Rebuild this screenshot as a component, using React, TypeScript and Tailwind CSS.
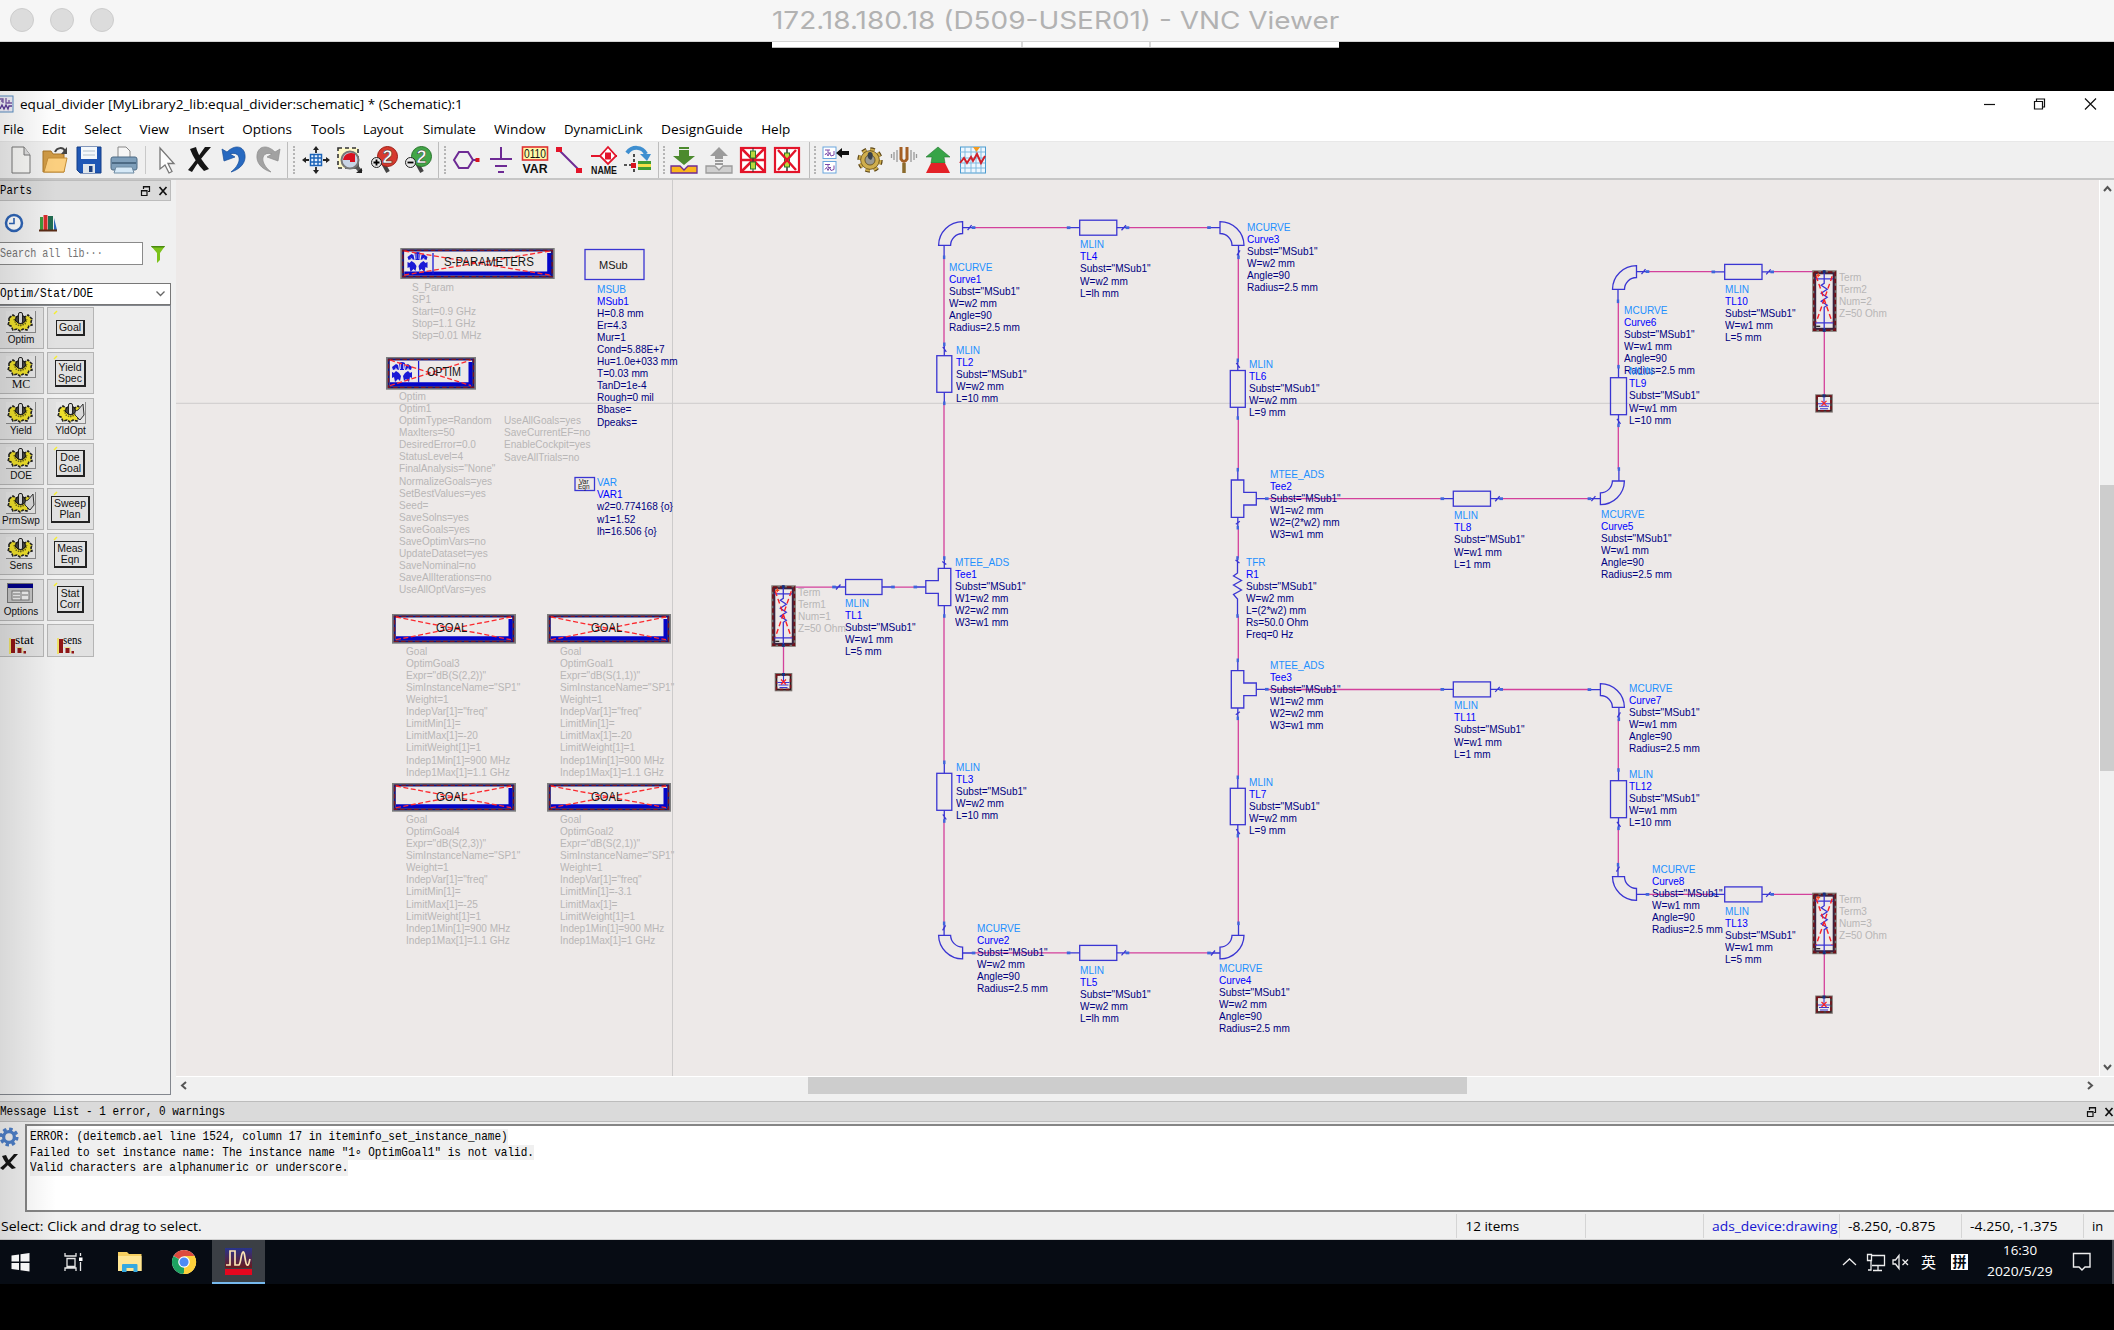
import React, { useLayoutEffect, useRef, useState } from "react";

/* Text condensed or widened to an exact width, measured at run time. */
function Fit({ w, className = "", children }: { w: number; className?: string; children: React.ReactNode }) {
  const ref = useRef<HTMLSpanElement>(null);
  const [scale, setScale] = useState(1);
  useLayoutEffect(() => {
    if (ref.current && ref.current.offsetWidth) setScale(w / ref.current.offsetWidth);
  }, [w]);
  return (
    <span className={`inline-block shrink-0 whitespace-nowrap ${className}`} style={{ width: w }}>
      <span ref={ref} className="inline-block origin-left" style={{ transform: `scaleX(${scale})` }}>
        {children}
      </span>
    </span>
  );
}

const UI = "font-['Open_Sans','Noto_Sans_CJK_SC',sans-serif]";
const MONO = "font-['Liberation_Mono',monospace]";

/* ---------- title and menu ---------- */

function VncBar() {
  return (
    <div className="relative flex h-[42px] shrink-0 items-center justify-center border-b border-[#d4d4d4] bg-[#f6f6f6] pr-[3px]">
      <div className="absolute left-[10px] top-2 flex gap-4">
        {[0, 1, 2].map((i) => (
          <div key={i} className="size-6 rounded-full border border-[#cdcdcd] bg-[#dcdcdc]" />
        ))}
      </div>
      <Fit w={567} className="font-['Inter',sans-serif] text-[24px] leading-[42px] text-[#b2b2b2]">
        172.18.180.18 (D509-USER01) - VNC Viewer
      </Fit>
    </div>
  );
}

function VncTab() {
  return (
    <div className="flex h-[49px] shrink-0 justify-center bg-black pr-[3px]">
      <div className="flex h-[6px] w-[567px] border-b border-[#bbb] bg-white">
        <div className="w-[251px] border-r-2 border-[#d8d8d8]" />
        <div className="w-[128px] border-r-2 border-[#d8d8d8]" />
      </div>
    </div>
  );
}

function WindowTitle() {
  return (
    <div className="flex h-[26px] shrink-0 items-center bg-white">
      <svg width="14" height="18" viewBox="0 0 14 18">
        <rect x="-4" y="1" width="17" height="16" fill="#f2f2fb" stroke="#5b8fc4" />
        <path d="M0 4h3v4M6 3v5h6M1 6h2M9 5v3" stroke="#7b5ba8" fill="none" strokeWidth="1.3" />
        <path d="M0 14l2-4 2 4 2-4 2 4 1-3h3" stroke="#5b3a98" fill="none" strokeWidth="1.3" />
      </svg>
      <Fit w={443} className={`ml-[6px] text-[13.5px] leading-[26px] text-black ${UI}`}>
        equal_divider [MyLibrary2_lib:equal_divider:schematic] * (Schematic):1
      </Fit>
      <div className="flex-1" />
      <svg width="130" height="20" viewBox="1984 92 130 20" fill="none" stroke="#111" strokeWidth="1.2">
        <path d="M1984 102.5h11" />
        <path d="M2034.500 99.500h8v7.500h-8zM2036.500 99.500v-2.500h8v8h-2" />
        <path d="M2085 96.500l11 11M2096 96.500l-11 11" />
      </svg>
    </div>
  );
}

const MENUS: [string, number][] = [
  ["File", 20.5], ["Edit", 24], ["Select", 37], ["View", 30], ["Insert", 36], ["Options", 50], ["Tools", 34.500],
  ["Layout", 41], ["Simulate", 53], ["Window", 51.500], ["DynamicLink", 79], ["DesignGuide", 81.500], ["Help", 29],
];

function MenuBar() {
  return (
    <div className={`flex h-[25px] shrink-0 items-center gap-[18.350px] border-b border-[#e8e8e8] bg-white pl-[3px] text-[13.5px] leading-[24px] text-black ${UI}`}>
      {MENUS.map(([t, w]) => (
        <Fit key={t} w={w}>{t}</Fit>
      ))}
    </div>
  );
}

/* ---------- toolbar ---------- */

function Cell({ children, w = 34.4 }: { children: React.ReactNode; w?: number }) {
  return (
    <div className="flex shrink-0 items-center justify-center" style={{ width: w }}>
      <svg className="overflow-visible" width="28" height="28" viewBox="0 0 28 28" fill="none">{children}</svg>
    </div>
  );
}

function Grip() {
  return <div className="h-7 w-0 border-l-2 border-dotted border-[#b5b5b5]" />;
}

function Sep({ tall = true }: { tall?: boolean }) {
  return <div className={tall ? "h-[36px] w-px bg-[#bdbdbd]" : "h-[28px] w-px bg-[#c9c9c9]"} />;
}

function ZoomTwo({ color, dark, minus }: { color: string; dark: string; minus?: boolean }) {
  return (
    <>
      <path d="M13 17l5 9" stroke="#444" strokeWidth="4" />
      <circle cx="17.500" cy="10.500" r="10" fill={color} stroke={dark} />
      <text x="17.500" y="16.500" textAnchor="middle" fontFamily="Liberation Sans" fontWeight="700" fontSize="18" fill="#fff" stroke="#333" strokeWidth=".5">2</text>
      <circle cx="6.500" cy="16.500" r="5" fill="#e8e8e8" stroke="#222" />
      <path d={minus ? "M3.500 16.500h6" : "M3.500 16.500h6M6.500 13.500v6"} stroke="#000" strokeWidth="1.800" />
    </>
  );
}

function MiniCircuit({ y }: { y: number }) {
  return (
    <g transform={`translate(2 ${y})`}>
      <rect width="13" height="11.500" fill="#fff" stroke="#6aa6dd" />
      <path d="M2 3h3v3h3M5 3h2M2 8l1.500-2 1.500 3 1.500-3 1.500 3 3-1V4" stroke="#7c4aa8" />
    </g>
  );
}

function Gear({ cx, cy, r, fill, hole, stroke }: { cx: number; cy: number; r: number; fill: string; hole: string; stroke?: string }) {
  return (
    <g fill="none">
      <circle cx={cx} cy={cy} r={r * 0.88} stroke={stroke ?? fill} strokeWidth={r * 0.36} strokeDasharray={`${r * 0.36} ${r * 0.331}`} />
      <circle cx={cx} cy={cy} r={r * 0.86} stroke={fill} strokeWidth={r * 0.2} strokeDasharray={`${r * 0.36} ${r * 0.315}`} />
      <circle cx={cx} cy={cy} r={r * 0.78} fill={fill} stroke={stroke} strokeWidth=".8" />
      <circle cx={cx} cy={cy} r={r * 0.42} fill={hole} stroke={stroke} strokeWidth=".8" />
    </g>
  );
}

function Toolbar() {
  return (
    <div className="flex h-[38px] shrink-0 items-center border-b-2 border-[#c6c6c6] bg-[#f0f0f0]">
      <div className="flex w-[145px] items-center pl-[3.500px]">
        <Cell>
          <path d="M5 1h12l6 8v18H5z" fill="#f7f7f5" stroke="#777" />
          <path d="M17 1v8h6" fill="#ddd" stroke="#777" />
        </Cell>
        <Cell>
          <path d="M2 26V5h8l2 3h11v18z" fill="#cf9a45" stroke="#a87527" />
          <path d="M3 26L7 12h19l-3 14z" fill="#fbcf7f" stroke="#c38d36" />
          <path d="M14 6c2-5 8-5 10-1" stroke="#444" strokeWidth="2" />
          <path d="M26 1v7h-6z" fill="#444" />
        </Cell>
        <Cell>
          <path d="M2 1h24v26H5l-3-3z" fill="#1f57b5" stroke="#153f87" />
          <rect x="6" y="1" width="16" height="12" fill="#f4f8fb" />
          <path d="M8 5h12M8 9h12" stroke="#c7d3dd" strokeWidth="1.500" />
          <path d="M8 27v-9h12v9z" fill="#dfe5ea" />
          <rect x="14" y="20" width="3.500" height="6" fill="#1c3f80" />
        </Cell>
        <Cell>
          <path d="M8 13V1h8l4 4v8z" fill="#f6f6f6" stroke="#888" />
          <rect x="1" y="11" width="26" height="13" rx="2" fill="#7f9fba" stroke="#4d6b85" />
          <path d="M2 17h24" stroke="#4d6b85" strokeWidth="2" />
          <path d="M6 21h16l2 6H4z" fill="#d6e9f7" stroke="#6f8ba2" />
        </Cell>
      </div>
      <Sep tall={false} />
      <div className="flex w-[141px] items-center pl-[2px]">
        <Cell>
          <path d="M9 2v21l5-4 4 8 3-1.500-4-8h6z" fill="#fdfdfd" stroke="#777" strokeWidth="1.300" />
        </Cell>
        <Cell>
          <path d="M2 24C8 17 14 8 19 1h6C18 9 11 17 6 26zM4 3l6-2c2 8 7 15 13 22l-5 2C12 19 7 11 4 3z" fill="#161616" />
        </Cell>
        <Cell>
          <path d="M2 3l2 12 11-4-5-3c6-2 10 1 9 7-1 4-4 8-8 11 10-3 15-10 14-17C24 0 15-2 7 6z" fill="#2769c0" stroke="#174e98" strokeWidth=".7" />
        </Cell>
        <Cell>
          <path d="M26 3l-2 12-11-4 5-3c-6-2-10 1-9 7 1 4 4 8 8 11C7 23 2 16 3 9 4 0 13-2 21 6z" fill="#a2a2a2" stroke="#8c8c8c" strokeWidth=".7" />
        </Cell>
      </div>
      <Sep />
      <div className="flex w-[150px] items-center pl-[5px]">
        <Grip />
        <div className="w-[3.500px]" />
        <Cell w={34}>
          <rect x="8.500" y="8.500" width="11" height="11" fill="#eaf4ff" stroke="#1b63b8" strokeWidth="1.500" />
          <path d="M12 8v12M16 8v12M8 12h12M8 16h12" stroke="#1b63b8" strokeWidth="1.400" />
          <path d="M14 0l3 4h-6zM14 28l3-4h-6zM0 14l4-3v6zM28 14l-4-3v6z" fill="#222" />
          <path d="M14 3v4M14 21v4M3 14h4M21 14h4" stroke="#222" strokeWidth="1.800" />
        </Cell>
        <Cell w={34}>
          <rect x="2" y="2" width="20" height="20" fill="#fdf9c8" stroke="#333" strokeWidth="1.600" strokeDasharray="4 3" />
          <path d="M20 20l5 6" stroke="#555" strokeWidth="4" />
          <circle cx="14" cy="14" r="8.500" fill="#c9d5e6" stroke="#777" strokeWidth="2" />
          <path d="M14 14H7a8 8 0 0 1 12-6v8h-5z" fill="#d8101e" />
          <path d="M26 22v5h-6z" fill="#222" />
        </Cell>
        <Cell w={34}><ZoomTwo color="#d63a2e" dark="#9c1e16" /></Cell>
        <Cell w={34}><ZoomTwo color="#43a648" dark="#28742b" minus /></Cell>
      </div>
      <Sep />
      <div className="flex w-[219px] items-center pl-[5px]">
        <Grip />
        <div className="w-[3px]" />
        <Cell w={34.400}>
          <path d="M7 6h9l5 8-5 8H7l-5-8z" stroke="#6d2a94" strokeWidth="2" />
          <path d="M21 14h4" stroke="#6d2a94" strokeWidth="2" />
          <rect x="23.500" y="12" width="4" height="4" fill="#d7151f" />
        </Cell>
        <Cell w={34.400}>
          <path d="M14 1v12M3 13h22M8 20h12M11 26h6" stroke="#6d2a94" strokeWidth="2" />
        </Cell>
        <Cell w={34.400}>
          <rect x="1.500" y="1" width="25" height="13" fill="#fff9a8" stroke="#e03030" strokeWidth="1.600" />
          <text x="14" y="12" textAnchor="middle" textLength="22" lengthAdjust="spacingAndGlyphs" fontFamily="Liberation Sans" fontSize="12" fill="#111">0110</text>
          <text x="14" y="27" textAnchor="middle" textLength="25" lengthAdjust="spacingAndGlyphs" fontFamily="Liberation Sans" fontWeight="700" fontSize="13" fill="#111">VAR</text>
        </Cell>
        <Cell w={34.400}>
          <path d="M4 4l20 20" stroke="#6d2a94" strokeWidth="2" />
          <rect x="1" y="1" width="6" height="5" fill="#e3142a" />
          <rect x="21" y="22" width="6" height="5" fill="#e3142a" />
        </Cell>
        <Cell w={34.400}>
          <path d="M1 10h5M22 10h5" stroke="#e3142a" strokeWidth="2" />
          <path d="M18 1l8 9-8 8-8-8z" fill="#fff" stroke="#e3142a" strokeWidth="1.800" />
          <path d="M3 10h7" stroke="#e3142a" strokeWidth="2" />
          <rect x="15" y="6.500" width="6" height="7" fill="#e3142a" />
          <text x="14" y="27.500" textAnchor="middle" textLength="26" lengthAdjust="spacingAndGlyphs" fontFamily="Liberation Sans" fontWeight="700" fontSize="10" fill="#111">NAME</text>
        </Cell>
        <Cell w={34.400}>
          <path d="M3 7C8 0 18 0 22 8" stroke="#3f8fd0" strokeWidth="4" />
          <path d="M16 8h11l-4 7z" fill="#3f8fd0" />
          <path d="M10 8v20M0 19h8" stroke="#222" strokeWidth="1.600" strokeDasharray="3 2" />
          <rect x="7" y="17" width="5" height="5" fill="#d7151f" />
          <rect x="14" y="15" width="13" height="9" fill="#3f9b34" />
          <rect x="14" y="18" width="13" height="3" fill="#f6e04a" />
        </Cell>
      </div>
      <Sep />
      <div className="flex w-[150px] items-center pl-[4px]">
        <Grip />
        <div className="w-[2px]" />
        <Cell w={34.400}>
          <path d="M9 1h10v2H9zM9 4h10v6h6l-11 9L3 10h6z" fill="#4c8a2e" />
          <path d="M1 20h9l4 4 4-4h9v7H1z" fill="#fbb51c" stroke="#6d2a94" strokeWidth="1.300" />
        </Cell>
        <Cell w={34.400}>
          <path d="M14 1l9 9h-5v3h-8v-3H5zM10 14h8v2h-8zM10 17h8v2h-8z" fill="#9b9b9b" />
          <path d="M1 20h9l4 4 4-4h9v7H1z" fill="#cfcfcf" stroke="#9b9b9b" strokeWidth="1.300" />
        </Cell>
        <Cell w={34.400}>
          <rect x="2" y="2" width="24" height="24" fill="#fff" stroke="#e3142a" strokeWidth="2.200" />
          <path d="M2 2l24 24M26 2L2 26M2 14h24" stroke="#e3142a" strokeWidth="2.600" />
          <path d="M14 2v24" stroke="#333" />
          <rect x="11.500" y="5" width="5" height="7" fill="#bcd83c" stroke="#2c7a2c" />
          <rect x="11.500" y="16" width="5" height="7" fill="#bcd83c" stroke="#2c7a2c" />
        </Cell>
        <Cell w={34.400}>
          <rect x="2" y="2" width="24" height="24" fill="#fff" stroke="#e3142a" strokeWidth="2.200" />
          <path d="M14 3v22" stroke="#333" strokeWidth="1.500" />
          <rect x="11.500" y="7" width="5" height="14" fill="#bcd83c" stroke="#2c7a2c" />
          <path d="M5 4l18 20M23 4L5 24" stroke="#e3142a" strokeWidth="2.400" />
        </Cell>
      </div>
      <Sep />
      <div className="flex items-center pl-[4px]">
        <Grip />
        <div className="w-[2px]" />
        <Cell>
          <MiniCircuit y={1} />
          <MiniCircuit y={15.500} />
          <path d="M15 7l6-5v3h7v4h-7v3z" fill="#111" />
        </Cell>
        <Cell>
          <Gear cx={14} cy={14} r={12} fill="#cfae4c" hole="#9a9a92" stroke="#5e481a" />
          <path d="M14 6c4 0 3 6 1 8l-2-1c-2-2-2-7 1-7z" fill="#39424a" />
        </Cell>
        <Cell>
          <path d="M11 1v12q3 5 6 0V1" stroke="#a45f24" strokeWidth="3" />
          <path d="M14 17v10" stroke="#8b6b2c" strokeWidth="3.500" />
          <path d="M7 4v12M21 4v12M4 6v8M24 6v8M1.500 8v4M26.500 8v4" stroke="#999" strokeWidth="1.300" />
        </Cell>
        <Cell>
          <path d="M14 1l12 10h-6l1 6H7l1-6H2z" fill="#37a447" stroke="#23772f" strokeWidth=".6" />
          <path d="M7 17h14l5 10H2z" fill="#e32228" />
        </Cell>
        <Cell>
          <rect x="1.500" y="1" width="25" height="26" fill="#eef7fe" stroke="#4b9bd0" />
          <path d="M6 1v26M12 1v26M17 1v26M22 1v26M1 6h25M1 12h25M1 17h25M1 22h25" stroke="#7fb9df" />
          <path d="M1 17l4-5 3 5 4-6 2 4 4-7 4 9 4-7" stroke="#d0212b" strokeWidth="2" />
          <path d="M14 1h7l-3.500 5z" fill="#f39a21" />
        </Cell>
      </div>
    </div>
  );
}

/* ---------- parts palette ---------- */

function FloatClose() {
  return (
    <svg width="30" height="12" viewBox="0 0 30 12" fill="none" stroke="#111" strokeWidth="1.200">
      <path d="M4.500 4V1.500h6v5H9M4 2h7" />
      <path d="M2.500 5.500h5.500v5H2.500zM2 6h6" />
      <path d="M20.500 2l7 8M27.500 2l-7 8" strokeWidth="1.700" />
    </svg>
  );
}

function YellowGear({ tool }: { tool?: boolean }) {
  return (
    <div className="mx-auto h-[22px] w-[30px] border-b border-r border-[#8a8a8a] bg-[#e6e6e6]">
      <svg width="29" height="21" viewBox="0 0 29 21" fill="none">
        <path d="M3 7l4-3 3 2 9-0 3-2 4 4-1 3 1 3-3 1-2 4-4-1-3 2-3-2-4 1-2-4-3-1 1-3z" fill="#efe02a" stroke="#222" strokeWidth="1.600" strokeDasharray="3 1" />
        <path d="M8 8l2 5 4 2 5-2 2-5" stroke="#6b6416" strokeWidth="1.400" strokeDasharray="1.500 1" />
        <path d="M9 9q6 8 11 0l-2-4h-7z" fill="#444" stroke="#111" />
        <rect x="12.500" y="1.500" width="4" height="11" rx="1.500" fill="#ddd" stroke="#222" />
        {tool && <path d="M27 2l-5 6q-4 1-3 5l5 5 4-5z" fill="#d9d9d9" stroke="#333" />}
      </svg>
    </div>
  );
}

function WindowGlyph() {
  return (
    <svg className="mx-auto" width="28" height="22" viewBox="0 0 28 22">
      <rect x=".5" y=".5" width="25" height="19" fill="#c4c4c4" stroke="#777" />
      <rect x="1" y="1" width="25" height="4" fill="#000087" />
      <rect x="5" y="8" width="17" height="9" fill="#eee" stroke="#777" />
      <path d="M6 11h7M6 14h7M14 8v9M15 12h6" stroke="#777" />
    </svg>
  );
}

function BarGlyph() {
  return (
    <svg className="shrink-0" width="18" height="18" viewBox="0 0 18 18">
      <path d="M1 1v16" stroke="#f0e040" strokeWidth="1.500" />
      <rect x="2" y="2" width="4" height="14" fill="#8f1616" />
      <rect x="8.500" y="11" width="4" height="5" fill="#8f1616" />
      <rect x="14.500" y="14" width="2.500" height="2.500" fill="#8f1616" />
      <path d="M7.500 10.500h6v5" stroke="#f0e040" strokeDasharray="1 1" fill="none" />
    </svg>
  );
}

type Part = { kind: "gear" | "tool" | "box" | "win" | "bar"; text: string[]; serif?: boolean };
const PARTS: Part[] = [
  { kind: "gear", text: ["Optim"] }, { kind: "box", text: ["Goal"] },
  { kind: "gear", text: ["MC"], serif: true }, { kind: "box", text: ["Yield", "Spec"] },
  { kind: "gear", text: ["Yield"] }, { kind: "tool", text: ["YldOpt"] },
  { kind: "gear", text: ["DOE"] }, { kind: "box", text: ["Doe", "Goal"] },
  { kind: "tool", text: ["PrmSwp"] }, { kind: "box", text: ["Sweep", "Plan"] },
  { kind: "gear", text: ["Sens"] }, { kind: "box", text: ["Meas", "Eqn"] },
  { kind: "win", text: ["Options"] }, { kind: "box", text: ["Stat", "Corr"] },
  { kind: "bar", text: ["stat"] }, { kind: "bar", text: ["sens"] },
];

function PartButton({ p, left }: { p: Part; left: boolean }) {
  const size = p.kind === "bar" ? "h-[33px]" : "h-[42px]";
  return (
    <div className={`${size} overflow-hidden border border-[#b5b5b5] bg-[#e1e1e1] ${left ? "border-l-0 pr-px" : ""}`}>
      {p.kind === "box" && (
        <div className="relative flex h-full items-center justify-center">
          <svg className="absolute left-[5px] top-[2px]" width="5" height="5"><path d="M1 4l3-3" stroke="#f5ee30" strokeWidth="1.500" /></svg>
          <div className="border border-b-2 border-r-2 border-[#222] px-[2px] py-px text-center font-['Liberation_Sans',sans-serif] text-[10.500px] leading-[11px] text-[#111]">
            {p.text.map((t) => <div key={t}>{t}</div>)}
          </div>
        </div>
      )}
      {p.kind === "bar" && (
        <div className="flex h-full items-end pb-px pl-[9px]">
          <BarGlyph />
          <Fit w={19} className="-ml-[12px] self-center font-['Liberation_Serif',serif] text-[12px] leading-[14px] text-black">{p.text[0]}</Fit>
        </div>
      )}
      {(p.kind === "gear" || p.kind === "tool" || p.kind === "win") && (
        <div className="pt-[3px] text-center">
          {p.kind === "win" ? <WindowGlyph /> : <YellowGear tool={p.kind === "tool"} />}
          <div className={p.serif ? "font-['Liberation_Serif',serif] text-[12px] leading-[12px] text-[#111]" : "font-['Liberation_Sans',sans-serif] text-[10px] leading-[13px] text-[#111]"}>
            {p.text[0]}
          </div>
        </div>
      )}
    </div>
  );
}

function PartsPanel() {
  return (
    <div className="flex w-[171px] shrink-0 flex-col">
      <div className={`flex h-[21px] items-center justify-between border border-l-0 border-[#bcbcbc] bg-[#dadada] pr-px pt-px text-[13px] leading-[20px] text-black ${MONO}`}>
        <Fit w={32}>Parts</Fit>
        <FloatClose />
      </div>
      <div className="flex h-[41px] items-center gap-[15px] pl-[4px] pt-[2px]">
        <svg width="20" height="20" viewBox="0 0 20 20" fill="none" stroke="#2e64b5">
          <circle cx="10" cy="10" r="8" fill="#fff" strokeWidth="2.500" />
          <path d="M10 5v5.500H5" strokeWidth="1.600" />
        </svg>
        <svg width="19" height="18" viewBox="0 0 19 18">
          <rect x="1" y="3" width="3" height="13" fill="#3d9a3d" />
          <rect x="4.500" y="1" width="4" height="15" fill="#d72d2d" />
          <rect x="9" y="2" width="5" height="14" fill="#206b50" />
          <path d="M15 4l3 12h-3z" fill="#2c66b8" />
          <path d="M0 16.500h18" stroke="#5a2c16" strokeWidth="2" />
        </svg>
      </div>
      <div className="flex h-[23px] items-center">
        <div className={`flex h-[23px] w-[143px] items-center border border-l-0 border-[#8a8a8a] bg-white text-[13px] leading-[20px] text-[#757575] ${MONO}`}>
          <Fit w={103}>Search all lib···</Fit>
        </div>
        <svg className="ml-[7px]" width="16" height="20" viewBox="0 0 16 20">
          <path d="M1 2h14L10 9v7l-3 3V9z" fill="#7cc21a" />
          <path d="M1 2h14l-1 1.500H2z" fill="#4a8a10" />
        </svg>
      </div>
      <div className={`mt-[18px] flex h-[22px] items-center justify-between border border-l-0 border-[#777] bg-white pr-[5px] text-[13px] leading-[20px] text-black ${MONO}`}>
        <Fit w={93}>Optim/Stat/DOE</Fit>
        <svg width="9" height="6" viewBox="0 0 9 6" fill="none" stroke="#666" strokeWidth="1.300"><path d="M.5 .5l4 4 4-4" /></svg>
      </div>
      <div className="flex-1 border-b border-r border-t border-[#83878e] pt-px">
        <div className="grid w-[94px] grid-cols-[44px_47px] gap-x-[3px] gap-y-[3.300px]">
          {PARTS.map((p, i) => <PartButton key={p.text.join("-")} p={p} left={i % 2 === 0} />)}
        </div>
      </div>
    </div>
  );
}

/* ---------- schematic ---------- */

const BLUE = "#3a35d2";
const WIRE = "#d3409b";
const OX = 176;
const OY = 181;

type Kind = "active" | "off";
type Label = { x: number; y: number; kind: Kind; lines: string[] };

const sub = 'Subst="MSub1"';
const mlin = (x: number, y: number, name: string, w: string, l: string): Label => ({
  x, y, kind: "active", lines: ["MLIN", name, sub, `W=${w} mm`, `L=${l} mm`],
});
const curve = (x: number, y: number, name: string, w: string): Label => ({
  x, y, kind: "active", lines: ["MCURVE", name, sub, `W=${w} mm`, "Angle=90", "Radius=2.5 mm"],
});
const tee = (x: number, y: number, name: string, w2: string): Label => ({
  x, y, kind: "active", lines: ["MTEE_ADS", name, sub, "W1=w2 mm", `W2=${w2} mm`, "W3=w1 mm"],
});
const term = (x: number, y: number, n: number): Label => ({
  x, y, kind: "off", lines: ["Term", `Term${n}`, `Num=${n}`, "Z=50 Ohm"],
});
const goal = (x: number, y: number, n: number, expr: string, min: string, max: string, hi: string): Label => ({
  x, y, kind: "off",
  lines: ["Goal", `OptimGoal${n}`, `Expr="dB(S(${expr}))"`, 'SimInstanceName="SP1"', "Weight=1", 'IndepVar[1]="freq"',
    `LimitMin[1]=${min}`, `LimitMax[1]=${max}`, "LimitWeight[1]=1", "Indep1Min[1]=900 MHz", `Indep1Max[1]=${hi} GHz`],
});

const LABELS: Label[] = [
  { x: 413, y: 287.7, kind: "off", lines: ["S_Param", "SP1", "Start=0.9 GHz", "Stop=1.1 GHz", "Step=0.01 MHz"] },
  { x: 399.300, y: 397, kind: "off", lines: ["Optim", "Optim1", "OptimType=Random", "MaxIters=50", "DesiredError=0.0", "StatusLevel=4", 'FinalAnalysis="None"', "NormalizeGoals=yes", "SetBestValues=yes", "Seed=", "SaveSolns=yes", "SaveGoals=yes", "SaveOptimVars=no", "UpdateDataset=yes", "SaveNominal=no", "SaveAllIterations=no", "UseAllOptVars=yes"] },
  { x: 505, y: 421.3, kind: "off", lines: ["UseAllGoals=yes", "SaveCurrentEF=no", "EnableCockpit=yes", "SaveAllTrials=no"] },
  { x: 597.3, y: 289.7, kind: "active", lines: ["MSUB", "MSub1", "H=0.8 mm", "Er=4.3", "Mur=1", "Cond=5.88E+7", "Hu=1.0e+033 mm", "T=0.03 mm", "TanD=1e-4", "Rough=0 mil", "Bbase=", "Dpeaks="] },
  { x: 598, y: 483.300, kind: "active", lines: ["VAR", "VAR1", "w2=0.774168 {o}", "w1=1.52", "lh=16.506 {o}"] },
  goal(407, 651.800, 3, "2,2", "", "-20", "1.1"),
  goal(560.700, 651.800, 1, "1,1", "", "-20", "1.1"),
  goal(407, 820, 4, "2,3", "", "-25", "1.1"),
  goal(560.700, 820, 2, "2,1", "-3.1", "", "1"),
  curve(950, 267.700, "Curve1", "w2"), curve(1247.500, 227.700, "Curve3", "w2"),
  curve(977.500, 928.700, "Curve2", "w2"), curve(1220, 968.700, "Curve4", "w2"),
  curve(1625, 310.700, "Curve6", "w1"), curve(1601.500, 515, "Curve5", "w1"),
  curve(1629.300, 688.700, "Curve7", "w1"), curve(1652.500, 870, "Curve8", "w1"),
  mlin(1080.500, 245.300, "TL4", "w2", "lh"), mlin(1080.500, 970.700, "TL5", "w2", "lh"),
  mlin(956.700, 350.700, "TL2", "w2", "10"), mlin(1250, 365, "TL6", "w2", "9"),
  mlin(956.700, 768, "TL3", "w2", "10"), mlin(1250, 782.700, "TL7", "w2", "9"),
  mlin(846, 603.700, "TL1", "w1", "5"), mlin(1725.500, 289.700, "TL10", "w1", "5"),
  mlin(1630, 372.300, "TL9", "w1", "10"), mlin(1454.500, 516.300, "TL8", "w1", "1"),
  mlin(1454.500, 706.300, "TL11", "w1", "1"), mlin(1630, 775, "TL12", "w1", "10"),
  mlin(1725.500, 912, "TL13", "w1", "5"),
  tee(1271, 475, "Tee2", "(2*w2)"), tee(1271, 665.500, "Tee3", "w2"), tee(955.500, 562.700, "Tee1", "w2"),
  { x: 1246.500, y: 562.700, kind: "active", lines: ["TFR", "R1", sub, "W=w2 mm", "L=(2*w2) mm", "Rs=50.0 Ohm", "Freq=0 Hz"] },
  term(798.500, 592.500, 1), term(1839.500, 277.500, 2), term(1839.500, 900, 3),
];

function LabelBlock({ l }: { l: Label }) {
  return (
    <div
      className="absolute origin-left scale-x-[0.915] whitespace-pre font-['Liberation_Sans',sans-serif] text-[11px] leading-[12.080px]"
      style={{ left: l.x - 0.7 - OX, top: l.y - 6 - OY }}
    >
      {l.lines.map((t, i) => (
        <div key={i} className={l.kind === "off" ? "text-[#b8b6b6]" : i === 0 ? "text-[#1e90ff]" : i === 1 ? "text-[#0000ff]" : "text-[#000080]"}>{t}</div>
      ))}
    </div>
  );
}

function Dot({ x, y, v }: { x: number; y: number; v?: boolean }) {
  return <rect x={x - (v ? 1.2 : 1.8)} y={y - (v ? 1.8 : 1.4)} width={v ? 2.4 : 3.6} height={v ? 3.6 : 2.8} fill="#3f66dc" />;
}

/* Horizontal line section with pins left and right of its body. */
function HLine({ x0, x1, y, a, b, mark = "r" }: { x0: number; x1: number; y: number; a: number; b: number; mark?: "l" | "r" }) {
  const m = mark === "r" ? b - 4 : a + 4;
  return (
    <g stroke={BLUE}>
      <rect x={x0} y={y - 7.5} width={x1 - x0} height="15" />
      <path d={`M${a} ${y}H${x0}M${x1} ${y}H${b}M${m - 2} ${y + 2.500}l4.500-5`} />
      <g stroke="none"><Dot x={a} y={y} /><Dot x={b} y={y} /></g>
    </g>
  );
}

/* Vertical line section with pins above and below its body. */
function VLine({ x, w, y0, y1, a, b, mark = "b" }: { x: number; w: number; y0: number; y1: number; a: number; b: number; mark?: "t" | "b" }) {
  const m = mark === "b" ? b - 4 : a + 5;
  return (
    <g stroke={BLUE}>
      <rect x={x - w / 2} y={y0} width={w} height={y1 - y0} />
      <path d={`M${x} ${a}V${y0}M${x} ${y1}V${b}M${x - 1.500} ${m - 2.500}l3.500 5`} />
      <g stroke="none"><Dot x={x} y={a} v /><Dot x={x} y={b} v /></g>
    </g>
  );
}

function Bend({ x, y, sx, sy, mark }: { x: number; y: number; sx: number; sy: number; mark: "h" | "v" | "" }) {
  return (
    <g transform={`translate(${x} ${y}) scale(${sx} ${sy})`} stroke={BLUE}>
      <path d="M0 -23.600A24 24 0 0 0 -24 0H-12A12 12 0 0 1 0 -11.800Z" />
      <path d="M0 -17.700H11M-18.500 0V12" />
      {mark === "h" && <path d="M5 -15.200l4-5" />}
      {mark === "v" && <path d="M-20 5l3 5" />}
      <g stroke="none"><Dot x={11} y={-17.7} /><Dot x={-18.5} y={12} v /></g>
    </g>
  );
}

function TeeShape({ x, y, dir, mark }: { x: number; y: number; dir: 1 | -1; mark: 1 | -1 }) {
  return (
    <g transform={`translate(${x} ${y}) scale(${dir} 1)`} stroke={BLUE}>
      <path d="M-6.500 -18.700H6V-6.300H18.500V6.300H6V18.700H-6.500Z" />
      <path d="M0 -29V-18.700M0 18.700V29M18.500 0H29.500" />
      <path d={`M-2 ${mark * 24 + 1.5}l4-3`} />
      <g stroke="none"><Dot x={0} y={-29} v /><Dot x={0} y={29} v /><Dot x={29} y={0} /></g>
    </g>
  );
}

/* Deactivated simulation block: framed box crossed out in red. */
function Block({ x, y, w, h, children }: { x: number; y: number; w: number; h: number; children?: React.ReactNode }) {
  return (
    <g>
      <rect x={x + 1} y={y + 1} width={w - 2} height={h - 2} stroke="#7d7d7d" strokeWidth="2" fill="#ede9e8" />
      <path d={`M${x + 4} ${y + h - 5.500}H${x + w - 5.500}V${y + 5}`} stroke="#0505c8" strokeWidth="4" />
      <rect x={x + 2.800} y={y + 2.500} width={w - 5.600} height={h - 5} stroke="#14147a" strokeWidth="2" />
      <rect x={x + 2.500} y={y + 2.300} width={w - 5} height={h - 4.600} stroke="#7a1420" strokeWidth="1.300" strokeDasharray="4.500 2.500" />
      {children}
      <path d={`M${x + 4} ${y + 3}L${x + w - 5} ${y + h - 4}M${x + 4} ${y + h - 4}L${x + w - 5} ${y + 3}`} stroke="#fb2a2f" strokeWidth="1.300" strokeDasharray="5 2.500" />
    </g>
  );
}

function GearLogo({ x, y }: { x: number; y: number }) {
  return (
    <g transform={`translate(${x} ${y})`} fill="#1a1ad6">
      <path d="M-3-9q3-2 6 0l-1 7h-4zM-6-8l2 1 1 5-3-1-3 1-1-3zM6-8l-2 1-1 5 3-1 3 1 1-3z" />
      <path d="M-10 0l2 1 2-2 3 2 2 3-1 5-2-2-3 3-1-5-2 1zM10 0l-2 1-2-2-3 2-2 3 1 5 2-2 3 3 1-5 2 1z" />
      <path d="M-1.500-8v5M1.500-8v5M-7-4l2 1M7-4l-2 1" stroke="#cfcdf0" strokeWidth=".8" />
    </g>
  );
}

function TermShape({ x, y }: { x: number; y: number }) {
  return (
    <g transform={`translate(${x} ${y})`}>
      <rect x="-12" y="0" width="24.500" height="61.500" fill="#7b736f" />
      <rect x="-9" y="3" width="18.500" height="55.500" fill="#ede9e8" stroke="#3a2440" strokeWidth="2" />
      <rect x="-10.300" y="1.800" width="21.300" height="58" stroke="#701018" strokeWidth="1.700" strokeDasharray="4.500 2.500" />
      <path d="M0 0V13l-3 2 6 4-6 4 6 4-6 4 6 4-3 2V61M-9 8.500H9M-9 52.500H9" stroke={BLUE} strokeWidth="1.300" />
      <path d="M-8 6L8 52M8 6L-8 52" stroke="#f82027" strokeWidth="1.400" strokeDasharray="5 3" />
      <path d="M-8 5h4M-6 3v4" stroke="#f24a20" strokeWidth="1.300" />
      <path d="M-8 56h4" stroke="#222" />
      <rect x="-1.500" y="0" width="3" height="3" fill="#14307c" />
      <rect x="-1.500" y="58.500" width="3" height="3" fill="#14307c" />
    </g>
  );
}

function GroundShape({ x, y }: { x: number; y: number }) {
  return (
    <g transform={`translate(${x} ${y})`}>
      <rect x="-8.800" y="0" width="17.600" height="18.300" fill="#7b736f" />
      <rect x="-6.200" y="2.700" width="12.400" height="12.900" fill="#ede9e8" />
      <rect x="-7" y="1.800" width="14" height="14.700" stroke="#2c1c20" strokeWidth="1.300" />
      <rect x="-7" y="1.800" width="14" height="14.700" stroke="#7d1018" strokeWidth="1.500" strokeDasharray="3.500 2.500" />
      <path d="M0 1V9M-6 9.500H6M-5 12H5M-4 14.500H4" stroke={BLUE} strokeWidth="1.100" />
      <path d="M-2.500 6.500l5 5M2.500 6.500l-5 5" stroke="#f82027" strokeWidth="1.200" />
      <rect x="-1.500" y="0" width="3" height="3" fill="#14307c" />
    </g>
  );
}

const WIRES = [
  "M944 258V345M944 404V559M944 617V763M944 822V925",
  "M1238.300 258V361M1238.300 419V470M1238.300 529V559M1238.300 617V661M1238.300 719V778M1238.300 837V925",
  "M973 228.600H1068M1127 228.600H1208M973 953.900H1068M1127 953.900H1208",
  "M783 588.200H834M893 588.200H915",
  "M1268 499.700H1442M1501 499.700H1589M1268 690.500H1442M1501 690.500H1589",
  "M1618.300 302V368M1618.300 426V470M1618.300 720V771M1618.300 829V867",
  "M1647 272.700H1713M1772 272.700H1824M1647 895.400H1713M1772 895.400H1824",
  "M1824.300 332V395M1824.300 955V997M783.500 647V674",
].join("");

function Drawing() {
  return (
    <svg className="absolute inset-0" width="1923" height="896" viewBox={`${OX} ${OY} 1923 896`} fill="none" strokeWidth="1.300">
      <path d="M672.500 181V1077M176 404.300H2099" stroke="#cdcbcb" strokeWidth="1" />
      <path d={WIRES} stroke={WIRE} strokeWidth="1.300" />

      <Block x={400.3} y={249} w={154.400} h={31}><path d="M433 254V275" stroke="#1a1ad6" /><GearLogo x={417.5} y={263} /></Block>
      <Block x={386} y={358} w={90} h={32.700}><path d="M418.600 362V384" stroke="#1a1ad6" /><GearLogo x={402} y={373} /></Block>
      <Block x={392} y={615} w={124} h={29.700} />
      <Block x={547} y={615} w={124} h={29.700} />
      <Block x={392} y={784} w={124} h={28.700} />
      <Block x={547} y={784} w={124} h={28.700} />
      <rect x="585" y="250.500" width="59" height="30" stroke={BLUE} />
      <rect x="575" y="478.500" width="19.500" height="13" stroke={BLUE} />

      <Bend x={962.6} y={246.3} sx={1} sy={1} mark="h" />
      <Bend x={1220} y={246.3} sx={-1} sy={1} mark="v" />
      <Bend x={962.6} y={936.3} sx={1} sy={-1} mark="v" />
      <Bend x={1220} y={936.3} sx={-1} sy={-1} mark="h" />
      <Bend x={1636.500} y={290.300} sx={1} sy={1} mark="h" />
      <Bend x={1600.400} y={482} sx={-1} sy={-1} mark="h" />
      <Bend x={1600.400} y={708.300} sx={-1} sy={1} mark="v" />
      <Bend x={1636.500} y={877.700} sx={1} sy={-1} mark="v" />

      <HLine x0={1079.700} x1={1116.800} y={228.700} a={1068.600} b={1127.500} />
      <HLine x0={1079.700} x1={1116.800} y={953.900} a={1068.600} b={1127.500} />
      <HLine x0={845.600} x1={882} y={588} a={834} b={893} mark="l" />
      <HLine x0={1453.300} x1={1490.500} y={499.700} a={1442.300} b={1501.200} />
      <HLine x0={1453.300} x1={1490.500} y={690.400} a={1442.300} b={1501.200} />
      <HLine x0={1724.700} x1={1762} y={272.900} a={1713.300} b={1772.200} />
      <HLine x0={1724.700} x1={1762} y={895.400} a={1713.300} b={1772.200} />
      <VLine x={944.300} w={15} y0={356.700} y1={393.300} a={345.300} b={404.300} mark="t" />
      <VLine x={1237.800} w={15} y0={371.500} y1={408.300} a={361.300} b={419} mark="t" />
      <VLine x={944.300} w={15} y0={774.300} y1={811.300} a={763.300} b={822} />
      <VLine x={1237.800} w={15} y0={789.300} y1={825.700} a={778.300} b={836.700} />
      <VLine x={1618.500} w={16} y0={378.700} y1={415.700} a={367.700} b={426.300} />
      <VLine x={1618.500} w={16} y0={781.700} y1={818.700} a={771} b={829.300} />

      <TeeShape x={944.3} y={588} dir={-1} mark={-1} />
      <TeeShape x={1237.800} y={499.700} dir={1} mark={1} />
      <TeeShape x={1237.800} y={690.300} dir={1} mark={1} />
      <path d="M1237.500 559V574l-4 3 8 4.500-8 4.500 8 5-8 4.500 4 4.500V617M1235.500 561l4 3" stroke={BLUE} />
      <Dot x={1237.5} y={559} v />
      <Dot x={1237.5} y={617} v />

      <TermShape x={783.300} y={586.300} />
      <TermShape x={1824.200} y={271.300} />
      <TermShape x={1824.200} y={893.700} />
      <GroundShape x={783.500} y={674} />
      <GroundShape x={1824} y={395.300} />
      <GroundShape x={1824} y={996.500} />
    </svg>
  );
}

const CAPTIONS: { x: number; y: number; w: number; t: string; size: string }[] = [
  { x: 444, y: 262.500, w: 90, t: "S-PARAMETERS", size: "text-[12px]" },
  { x: 427, y: 372.500, w: 34, t: "OPTIM", size: "text-[12px]" },
  { x: 436, y: 628.500, w: 31, t: "GOAL", size: "text-[12px]" },
  { x: 590.5, y: 628.500, w: 31, t: "GOAL", size: "text-[12px]" },
  { x: 436, y: 797.500, w: 31, t: "GOAL", size: "text-[12px]" },
  { x: 590.5, y: 797.500, w: 31, t: "GOAL", size: "text-[12px]" },
  { x: 599, y: 265.500, w: 29, t: "MSub", size: "text-[11px]" },
  { x: 579, y: 482.500, w: 10, t: "Var", size: "text-[6.500px]" },
  { x: 578, y: 488, w: 12, t: "Eqn", size: "text-[6.500px]" },
];

function Schematic() {
  return (
    <div className="relative h-[896px] w-[1923px] shrink-0 overflow-hidden bg-[#ede9e8]">
      <Drawing />
      {CAPTIONS.map((c, i) => (
        <div key={i} className={`absolute font-['Liberation_Sans',sans-serif] leading-[14px] text-[#151515] ${c.size}`} style={{ left: c.x - OX, top: c.y - 7 - OY }}>
          <Fit w={c.w}>{c.t}</Fit>
        </div>
      ))}
      {LABELS.map((l, i) => <LabelBlock key={i} l={l} />)}
    </div>
  );
}

function Chevron({ d }: { d: string }) {
  return (
    <svg width="9" height="9" viewBox="0 0 9 9" fill="none" stroke="#555" strokeWidth="2"><path d={d} /></svg>
  );
}

function Workspace() {
  return (
    <div className="flex min-w-0 flex-1 flex-col pl-[5px]">
      <div className="flex">
        <Schematic />
        <div className="flex h-[896px] w-[15px] flex-col items-center border-l border-white bg-[#f0f0f0]">
          <div className="h-[305px] pl-px pt-[5px]"><Chevron d="M1 6l3.500-4L8 6" /></div>
          <div className="h-[286px] w-full bg-[#cdcdcd]" />
          <div className="flex flex-1 items-end pb-[4px] pl-px"><Chevron d="M1 2l3.500 4L8 2" /></div>
        </div>
      </div>
      <div className="flex h-[18px] items-center border-t border-white bg-[#f0f0f0]">
        <div className="w-[632px] pl-[4px]"><Chevron d="M6 1L2 4.500 6 8" /></div>
        <div className="h-[17px] w-[659px] bg-[#cdcdcd]" />
        <div className="flex flex-1 justify-end pr-[19px]"><Chevron d="M2 1l4 3.500L2 8" /></div>
      </div>
    </div>
  );
}

/* ---------- messages, status, taskbar ---------- */

function Messages() {
  return (
    <div className="flex shrink-0 flex-col bg-[#f0f0f0]">
      <div className={`flex h-[21px] items-center justify-between border-y border-[#bcbcbc] bg-[#dadada] text-[13px] leading-[19px] text-black ${MONO}`}>
        <Fit w={225}>Message List - 1 error, 0 warnings</Fit>
        <div className="-mr-px"><FloatClose /></div>
      </div>
      <div className="mt-[2px] flex h-[88px]">
        <svg width="25" height="60" viewBox="0 0 25 60">
          <Gear cx={9} cy={13} r={9} fill="#4d7fc8" hole="#f0f0f0" />
          <path d="M0 44C6 39 10 35 14 30h4C13 36 8 41 3 46zM2 32l4-1c2 5 5 9 10 13l-4 1C7 41 4 37 2 32z" fill="#161616" />
        </svg>
        <div className={`flex-1 border-y-2 border-l-2 border-[#858585] bg-white pl-[3px] pt-[3px] text-[13px] leading-[15.500px] text-black ${MONO}`}>
          <div className="h-[15.500px]"><Fit w={478} className="bg-[#f0f0f0]">ERROR: (deitemcb.ael line 1524, column 17 in iteminfo_set_instance_name)</Fit></div>
          <div className="h-[15.500px]"><Fit w={504} className="bg-[#f0f0f0]">Failed to set instance name: The instance name "1∘ OptimGoal1" is not valid.</Fit></div>
          <div className="h-[15.500px]"><Fit w={318} className="bg-[#f0f0f0]">Valid characters are alphanumeric or underscore.</Fit></div>
        </div>
      </div>
    </div>
  );
}

function StatusBar() {
  const cell = "flex h-6 items-center border-l border-[#d5d5d5]";
  return (
    <div className={`flex h-[28px] shrink-0 items-center border-b border-[#d0d0d0] bg-[#f0f0f0] text-[13.500px] leading-[24px] text-black ${UI}`}>
      <div className="w-[1455.500px] pl-px"><Fit w={201}>Select: Click and drag to select.</Fit></div>
      <div className={`${cell} w-[129.500px] pl-[9px]`}><Fit w={54}>12 items</Fit></div>
      <div className={`${cell} w-[117.500px]`} />
      <div className={`${cell} w-[136px] pl-[8.500px] text-[#1515d0]`}><Fit w={125}>ads_device:drawing</Fit></div>
      <div className={`${cell} w-[122px] pl-[8.500px]`}><Fit w={88}>-8.250, -0.875</Fit></div>
      <div className={`${cell} w-[122px] pl-[8.500px]`}><Fit w={88}>-4.250, -1.375</Fit></div>
      <div className={`${cell} pl-[8px]`}><Fit w={11.500}>in</Fit></div>
    </div>
  );
}

function Taskbar() {
  return (
    <div className={`flex h-[44px] shrink-0 items-center bg-[#070c14] text-white ${UI}`}>
      <svg width="212" height="44" viewBox="0 0 212 44" fill="none">
        <path d="M11.500 15.500l7.500-1v7h-7.500zM20.500 14.300l9-1.300v8.500h-9zM11.500 23h7.500v7l-7.500-1zM20.500 23h9v8.500l-9-1.300z" fill="#f4f4f4" />
        <path d="M65 13v3h11v-3M67 18.500h8v8h-8zM65 31v-3h11v3M80.500 13v3M80.500 22v9" stroke="#e6e6e6" strokeWidth="1.300" />
        <rect x="79" y="17.500" width="3.500" height="3.500" fill="#fff" />
        <path d="M118 12h9l2 2h12.500v17H118z" fill="#f6cf60" />
        <path d="M118 16h23.500v15H118z" fill="#ffe694" />
        <path d="M122 32v-7q0-1 1-1h13.500q1 0 1 1v7h-4v-4h-7v4z" fill="#35a9e0" />
        <circle cx="184" cy="22" r="12" fill="#fff" />
        <path d="M184 22L173.600 16A12 12 0 0 1 194.400 16z" fill="#dd4b3e" />
        <path d="M184 22l10.400-6A12 12 0 0 1 184 34z" fill="#fdd03b" />
        <path d="M184 22v12A12 12 0 0 1 173.600 16z" fill="#1da261" />
        <path d="M184 16h10.400A12 12 0 0 1 183 34l6-9z" fill="#fdd03b" />
        <circle cx="184" cy="22" r="5.800" fill="#fff" />
        <circle cx="184" cy="22" r="4.600" fill="#4c8bf5" />
      </svg>
      <div className="flex h-[44px] w-[53px] items-center justify-center border-b-2 border-[#76b9ed] bg-[#3b3f45]">
        <svg width="27" height="27" viewBox="0 0 27 27" fill="none">
          <defs>
            <linearGradient id="app" x1="0" y1="0" x2="0" y2="1"><stop offset="0" stopColor="#28348c" /><stop offset="1" stopColor="#6b1a1c" /></linearGradient>
          </defs>
          <rect width="27" height="20" fill="url(#app)" />
          <rect y="21" width="27" height="6" fill="#e4061e" />
          <path d="M1 17h4V3h5v14h4c2-2 2-12 4-13s2 12 4 13 2-3 3-6" stroke="#fbe3b4" strokeWidth="1.700" />
        </svg>
      </div>
      <div className="flex-1" />
      <svg width="78" height="44" viewBox="1838 0 78 44" fill="none" stroke="#eee" strokeWidth="1.300">
        <path d="M1842 25l6.500-6 6.500 6" />
        <path d="M1871 15.500h12.500v10H1871M1877 26v4M1872 30.500h9M1867 30h3v-9" />
        <path d="M1866.500 14.500h4v6h-4z" fill="#070c14" />
        <path d="M1892 20h2.500l3.500-4.500v13l-3.500-4.500h-2.500z" />
        <path d="M1901.500 19.500l5.500 5.500M1907 19.500l-5.500 5.500" />
      </svg>
      <div className="w-[24px] pl-[4px] text-[15px] leading-[44px]">英</div>
      <div className="ml-[10px] flex h-[16px] w-[17px] items-center justify-center bg-white text-[14px] font-bold leading-[16px] text-[#070c14]">拼</div>
      <div className="-mt-[2px] ml-[18px] flex w-[68px] flex-col items-center text-[13px] leading-[21px]">
        <Fit w={34}>16:30</Fit>
        <Fit w={66}>2020/5/29</Fit>
      </div>
      <svg className="ml-[17px] mr-[19px]" width="22" height="22" viewBox="0 0 22 22" fill="none" stroke="#eee" strokeWidth="1.400">
        <path d="M2.500 2.500h16.500v13.500h-5l-3 3-3-3h-5.500z" />
      </svg>
      <div className="h-full w-[2px] bg-[#4a4e55]" />
    </div>
  );
}

export default function App() {
  return (
    <div className="relative flex h-[1330px] w-[2114px] flex-col overflow-hidden bg-black">
      <VncBar />
      <VncTab />
      <WindowTitle />
      <MenuBar />
      <Toolbar />
      <div className="flex h-[921px] shrink-0 bg-[#f0f0f0]">
        <div className="flex h-[915px] w-full">
          <PartsPanel />
          <Workspace />
        </div>
      </div>
      <Messages />
      <StatusBar />
      <Taskbar />
      <div className="pointer-events-none absolute left-0 top-[91px] h-[1150px] w-[56px] bg-linear-to-r from-black/10 to-transparent" />
    </div>
  );
}
